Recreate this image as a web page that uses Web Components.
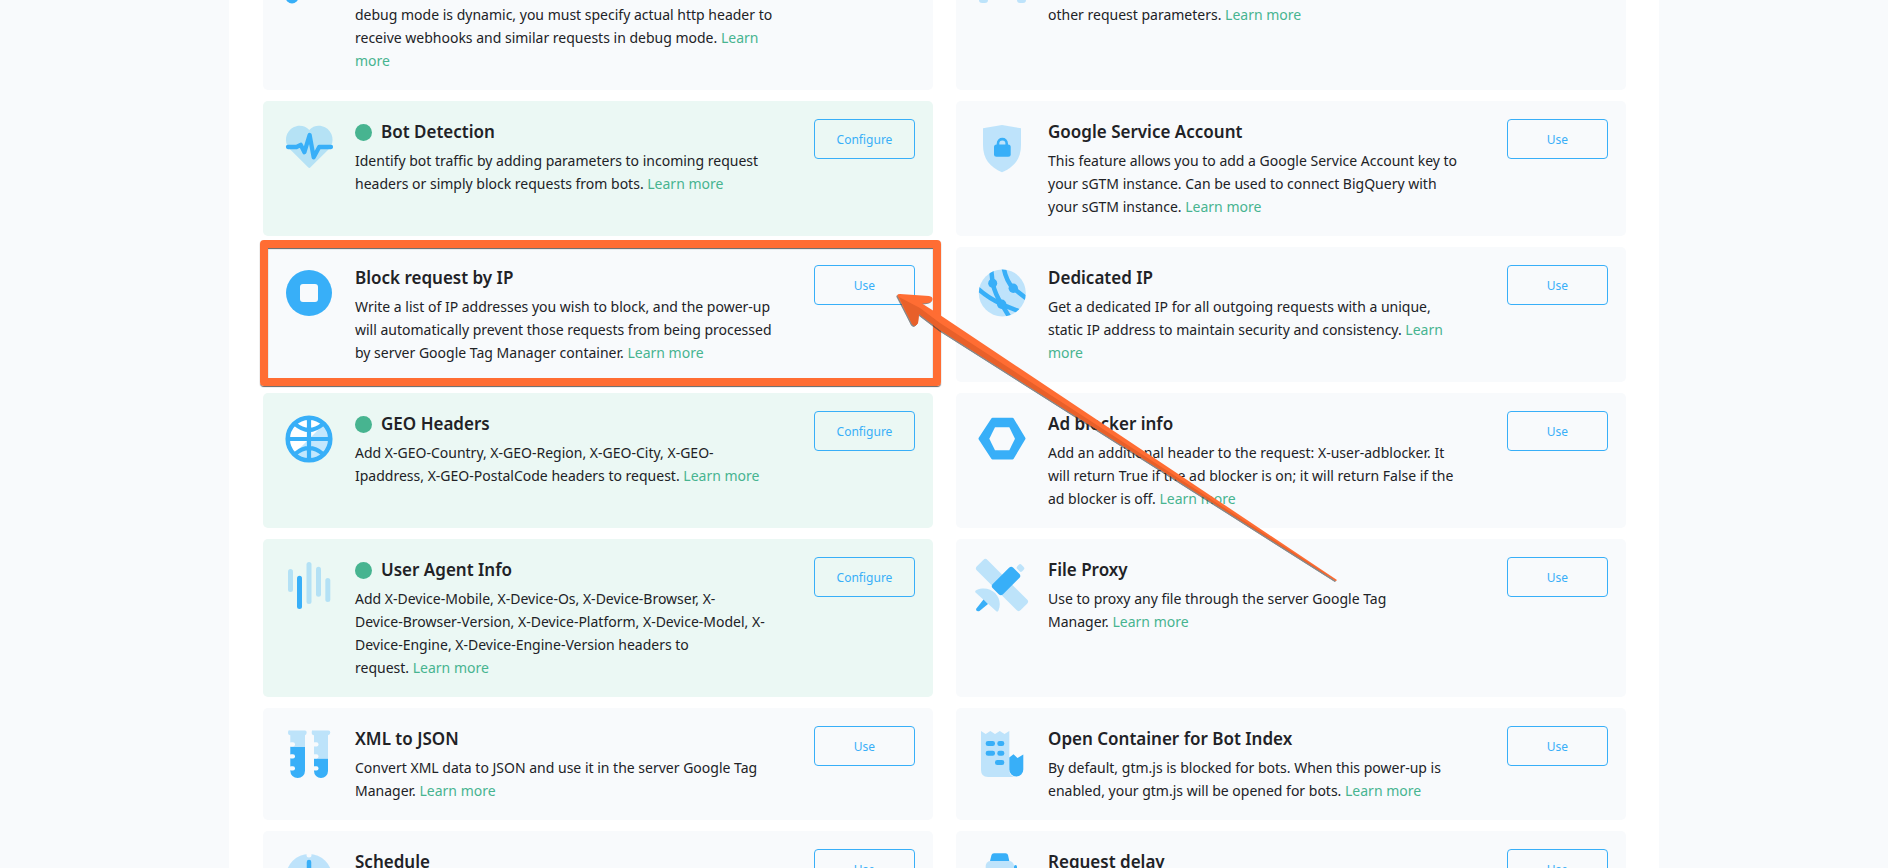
<!DOCTYPE html>
<html lang="en">
<head>
<meta charset="utf-8">
<meta name="viewport" content="width=device-width, initial-scale=1">
<title>Power-ups</title>
<style>
  :root {
    --blue: #38aff8;
    --green: #47b490;
    --ink: #212226;
    --surface: #f8fafc;
    --surface-active: #ebf8f4;
  }
  body {
    margin: 0;
    height: 100vh;
    overflow: hidden;
    background: var(--surface);
    color: var(--ink);
    font-family: "Noto Sans", "Open Sans", sans-serif;
  }
</style>
</head>
<body>

<power-list>
  <power-card icon="sliders"><br>debug mode is dynamic, you must specify actual http header to receive webhooks and similar requests in debug mode.&nbsp;<learn-more></learn-more></power-card>
  <power-card icon="robot"><br>other request parameters.&nbsp;<learn-more></learn-more></power-card>

  <power-card icon="heart" heading="Bot Detection" action="Configure" active>Identify bot traffic by adding parameters to incoming request headers or simply block requests from bots.&nbsp;<learn-more></learn-more></power-card>
  <power-card icon="shield" heading="Google Service Account" action="Use">This feature allows you to add a Google Service Account key to your sGTM instance. Can be used to connect BigQuery with your&nbsp;sGTM instance.&nbsp;<learn-more></learn-more></power-card>

  <power-card icon="stop" heading="Block request by IP" action="Use" highlight>Write a list of IP addresses you wish to block, and the power-up will automatically prevent those requests from being processed by server Google Tag Manager container.&nbsp;<learn-more></learn-more></power-card>
  <power-card icon="network" heading="Dedicated IP" action="Use">Get a dedicated IP for all outgoing requests with a unique, static&nbsp;IP address to maintain security and consistency.&nbsp;<learn-more></learn-more></power-card>

  <power-card icon="globe" heading="GEO Headers" action="Configure" active>Add X-GEO-Country, X-GEO-Region, X-GEO-City, X-GEO-Ipaddress, X-GEO-PostalCode headers to request.&nbsp;<learn-more></learn-more></power-card>
  <power-card icon="hexagon" heading="Ad blocker info" action="Use">Add an additional header to the request: X-user-adblocker. It<br>will return True if the ad blocker is on; it will return False if the ad&nbsp;blocker is off.&nbsp;<learn-more></learn-more></power-card>

  <power-card icon="bars" heading="User Agent Info" action="Configure" active>Add X-Device-Mobile, X-Device-Os, X-Device-Browser, X-<br>Device-Browser-Version, X-Device-Platform, X-Device-Model, X-<br>Device-Engine, X-Device-Engine-Version headers to<br>request.&nbsp;<learn-more></learn-more></power-card>
  <power-card icon="satellite" heading="File Proxy" action="Use">Use to proxy any file through the server Google Tag Manager.&nbsp;<learn-more></learn-more></power-card>

  <power-card icon="tubes" heading="XML to JSON" action="Use">Convert XML data to JSON and use it in the server Google Tag Manager.&nbsp;<learn-more></learn-more></power-card>
  <power-card icon="building" heading="Open Container for Bot Index" action="Use">By default, gtm.js is blocked for bots. When this power-up is enabled, your gtm.js will be opened for bots.&nbsp;<learn-more></learn-more></power-card>

  <power-card icon="clock" heading="Schedule" action="Use"></power-card>
  <power-card icon="timer" heading="Request delay" action="Use"></power-card>
</power-list>

<script>
  const ICONS = {
    sliders: '<circle cx="10" cy="46" r="6.5"/>',
    robot: '<g class="soft"><rect x="4" y="30" width="9" height="22" rx="3"/><rect x="42" y="30" width="9" height="22" rx="3"/></g>',
    heart: `
      <path class="soft" d="M27.3 10C31 5.500 38 4.500 43 7.300C51 11.500 53 22 47.500 28.500L28.500 47.300Q27.300 48.500 26.100 47.300L7.200 28.500C1.500 22 3.500 11.500 11.500 7.300C16.500 4.500 23.500 5.500 27.300 10Z"/>
      <path class="line" stroke-width="4.300" d="M6 27H14.500L18.700 24.800L22.400 32.200L27.600 15L31.700 37.300L37.200 27H49"/>`,
    shield: `
      <path class="soft" d="M27 5L46 8.300V25C46 39 39 47 27 52.300C15 47 8 39 8 25V8.300Z"/>
      <rect x="19" y="24.500" width="16.700" height="12.300" rx="2.500"/>
      <path class="line" stroke-width="2.600" d="M23 26V23.500C23 17.600 31.700 17.600 31.700 23.500V26"/>`,
    stop: '<circle cx="27" cy="27" r="23"/><rect class="hole" x="18" y="18" width="18" height="18" rx="3"/>',
    network: `
      <clipPath id="disc"><circle cx="27.300" cy="27" r="23.500"/></clipPath>
      <circle class="soft" cx="27.300" cy="27" r="23.500"/>
      <g clip-path="url(#disc)">
        <path class="line" stroke-width="4.500" d="M16 2L17.700 17.300Q20 28 26.700 38.300L35 52M2 22Q13 32 26.700 38.300L46 46M28.500 1Q31 15 38.300 22.300L52 33"/>
        <circle cx="17.700" cy="17.300" r="4.500"/><circle cx="38.300" cy="22.300" r="4.700"/><circle cx="26.700" cy="38.300" r="4.700"/>
      </g>`,
    globe: `
      <circle cx="27" cy="27" r="22" fill="#fff"/>
      <path class="soft" d="M43 11A22 22 0 0 1 11 43Z"/>
      <circle class="line" cx="27" cy="27" r="21.300" stroke-width="4.500"/>
      <path class="line" stroke-width="4.200" d="M27 6V48M6 27H48M13 12Q27 24 41 12M13 42Q27 30 41 42"/>`,
    hexagon: `
      <path stroke="currentColor" stroke-width="3" stroke-linejoin="round" d="M17.600 7.200H37.400L49 26.600L37.400 45.900H17.600L5 26.600Z"/>
      <path class="hole" d="M20 15.300H34.300L40 26.700L34.300 38.300H20L14.300 26.700Z"/>`,
    bars: `
      <g class="soft"><rect x="6" y="11" width="5" height="23" rx="2.500"/><rect x="24.500" y="4" width="5" height="42" rx="2.500"/><rect x="34" y="8.700" width="5" height="30" rx="2.500"/><rect x="43.300" y="20" width="5" height="24" rx="2.500"/></g>
      <rect x="15" y="17.700" width="5" height="33.300" rx="2.500"/>`,
    satellite: `
      <g class="soft">
        <rect x="-4" y="19.500" width="62" height="15" rx="3" transform="rotate(45 27 27)"/>
        <rect x="42" y="7" width="7" height="6" rx="2" transform="rotate(45 45.500 10)"/>
        <path d="M0.500 34.500Q-0.500 33 1.500 32C16 26 29 39 23.500 52.500Q22.500 54.500 21 53Z"/>
      </g>
      <path d="M8.500 41.500L13 46L4.500 53Q1 54 1 51Z"/>
      <rect x="16.500" y="15.800" width="29" height="14.500" rx="3" transform="rotate(-45 31 23)"/>`,
    tubes: `
      <g class="soft">
        <path d="M8 3.500H23Q24.700 3.500 24.700 5.500T23 8.300V20H8.300V8.300Q6 8.300 6 5.500T8 3.500Z"/>
        <path d="M31.500 3.500H46.500Q48.300 3.500 48.300 5.500T46 8.300V31.700H32V8.300Q29.700 8.300 29.700 5.500T31.500 3.500Z"/>
      </g>
      <path d="M8.300 20H23V43.700A7.350 7.350 0 0 1 8.300 43.700ZM32 31.700H46V44A7 7 0 0 1 32 44Z"/>
      <g class="hole">
        <rect x="7" y="15.300" width="6" height="4.300" rx="2"/><rect x="7" y="27.200" width="6" height="4.300" rx="2"/><rect x="7" y="39.200" width="6" height="4.300" rx="2"/>
        <rect x="30.500" y="15.300" width="6" height="4.300" rx="2"/><rect x="30.500" y="27.200" width="6" height="4.300" rx="2"/><rect x="30.500" y="39.200" width="6" height="4.300" rx="2"/>
      </g>`,
    building: `
      <path class="soft" d="M6 4L10.700 7L15.300 4L20 7L24.800 4L29.500 7L34.300 4V43Q34.300 50 41 50H13Q6 50 6 43Z"/>
      <path d="M34.300 30.500L38.500 27.300L42.500 31L48.300 27.500V42.500A7 7 0 0 1 34.300 42.500Z"/>
      <rect x="10.700" y="14" width="9.300" height="5" rx="2.300"/><rect x="22.300" y="14" width="7" height="5" rx="2.300"/>
      <rect x="10.700" y="23.700" width="9.300" height="5" rx="2.300"/><rect x="22.300" y="23.700" width="7" height="5" rx="2.300"/>
      <rect x="20" y="33" width="9.300" height="5" rx="2.300"/>`,
    clock: `
      <circle class="soft" cx="27" cy="27" r="23"/>
      <circle class="hole" cx="27" cy="5" r="2.500"/>
      <path class="line" stroke-width="4.500" d="M27 12V27"/>`,
    timer: `
      <path d="M15 11L16.500 5Q17 3.300 19 3.300H30.500Q32.500 3.300 33 5L34.300 11Z"/>
      <rect class="soft" x="10.700" y="11" width="28.300" height="34" rx="5"/>
      <rect x="39" y="15" width="3" height="9" rx="1.500"/>`
  };

  class PowerList extends HTMLElement {
    connectedCallback() {
      this.attachShadow({ mode: 'open' });
      this.shadowRoot.innerHTML = `
        <style>
          :host {
            display: flow-root;
            box-sizing: border-box;
            max-width: 1430px;
            height: 100vh;
            margin: 0 auto;
            padding: 0 33px 0 34px;
            overflow: hidden;
            background: #fff;
          }
          /* the list is scrolled part of the way past its first row */
          .grid {
            display: grid;
            grid-template-columns: repeat(2, minmax(0, 1fr));
            gap: 11px 23px;
            margin-top: -68px;
          }
        </style>
        <main class="grid"><slot></slot></main>
      `;
    }
  }
  customElements.define('power-list', PowerList);

  class PowerIcon extends HTMLElement {
    connectedCallback() {
      this.attachShadow({ mode: 'open' });
      this.shadowRoot.innerHTML = `
        <style>
          :host { display: block; color: var(--blue); }
          svg { display: block; width: 54px; height: 54px; fill: currentColor; }
          .soft { opacity: 0.3; }
          .hole { fill: var(--surface); }
          .line { fill: none; stroke: currentColor; stroke-linecap: round; stroke-linejoin: round; }
        </style>
        <svg viewBox="0 0 54 54" aria-hidden="true">${ICONS[this.getAttribute('name')] || ''}</svg>
      `;
    }
  }
  customElements.define('power-icon', PowerIcon);

  class LearnMore extends HTMLElement {
    connectedCallback() {
      this.attachShadow({ mode: 'open' });
      // no white space around the link, it sits in running text
      this.shadowRoot.innerHTML = `<style>
          :host { display: inline; }
          a { color: var(--green); text-decoration: none; }
          a:hover { text-decoration: underline; }
        </style><a href="#">Learn more</a>`;
    }
  }
  customElements.define('learn-more', LearnMore);

  class PointerArrow extends HTMLElement {
    connectedCallback() {
      this.attachShadow({ mode: 'open' });
      this.shadowRoot.innerHTML = `
        <style>
          :host { display: block; pointer-events: none; }
          svg { display: block; width: 450px; height: 300px; filter: drop-shadow(-1px 1px 0 rgba(60, 60, 60, 0.6)); }
        </style>
        <svg viewBox="0 0 450 300" aria-hidden="true">
          <path fill="#ff6d33" d="M5 8Q3 5 7 5L36 7Q41 8 39 12Q38 14 29 14.500L47 26L444 291L443 292L47 41L26 25L25 34Q22 39 19 35Z"/>
          <path fill="#e8602a" d="M6 8L27 19L47 34L443 291.500L443 292L47 41L26 25L25 34Q22 39 19 35Z"/>
        </svg>
      `;
    }
  }
  customElements.define('pointer-arrow', PointerArrow);

  class PowerCard extends HTMLElement {
    connectedCallback() {
      const heading = this.getAttribute('heading') || '';
      const action = this.getAttribute('action');
      const dot = this.hasAttribute('active') ? '<span class="dot"></span>' : '';
      const button = action ? `<button type="button">${action}</button>` : '';
      const marks = this.hasAttribute('highlight')
        ? '<div class="frame"></div><pointer-arrow></pointer-arrow>'
        : '';

      this.attachShadow({ mode: 'open' });
      this.shadowRoot.innerHTML = `
        <style>
          :host {
            display: grid;
            grid-template-columns: 54px minmax(0, 1fr) 101px;
            column-gap: 19px;
            align-items: start;
            box-sizing: border-box;
            min-height: 112px;
            padding: 18px 18px 18px 19px;
            border-radius: 5px;
            background: var(--surface);
          }
          :host([active]) { background: var(--surface-active); }
          :host([highlight]) { position: relative; z-index: 1; }
          power-icon { margin-top: 1px; }
          h2 {
            display: flex;
            align-items: center;
            gap: 9px;
            height: 26px;
            margin: 0 0 4px;
            font-size: 17px;
            font-weight: 600;
            line-height: 26px;
          }
          .dot {
            width: 17px;
            height: 17px;
            border-radius: 50%;
            background: var(--green);
          }
          p {
            margin: 0;
            padding-right: 16px;
            font-size: 14px;
            line-height: 23px;
          }
          button {
            height: 40px;
            padding: 2px 0 0;
            border: 1px solid var(--blue);
            border-radius: 4px;
            background: none;
            color: var(--blue);
            font: 12px/18px "Noto Sans", "Open Sans", sans-serif;
            cursor: pointer;
          }
          .frame {
            position: absolute;
            inset: -7px -8px -4px -3px;
            border: 8px solid #ff6d33;
            border-radius: 4px;
            box-shadow: 0 1px 1px rgba(60, 60, 60, 0.8), inset 0 1px 1px rgba(60, 60, 60, 0.8);
            pointer-events: none;
          }
          pointer-arrow {
            position: absolute;
            top: 42px;
            left: calc(100% - 40px);
          }
        </style>
        <power-icon name="${this.getAttribute('icon')}"></power-icon>
        <div>
          <h2>${dot}${heading}</h2>
          <p><slot></slot></p>
        </div>
        ${button}
        ${marks}
      `;
    }
  }
  customElements.define('power-card', PowerCard);
</script>
</body>
</html>
